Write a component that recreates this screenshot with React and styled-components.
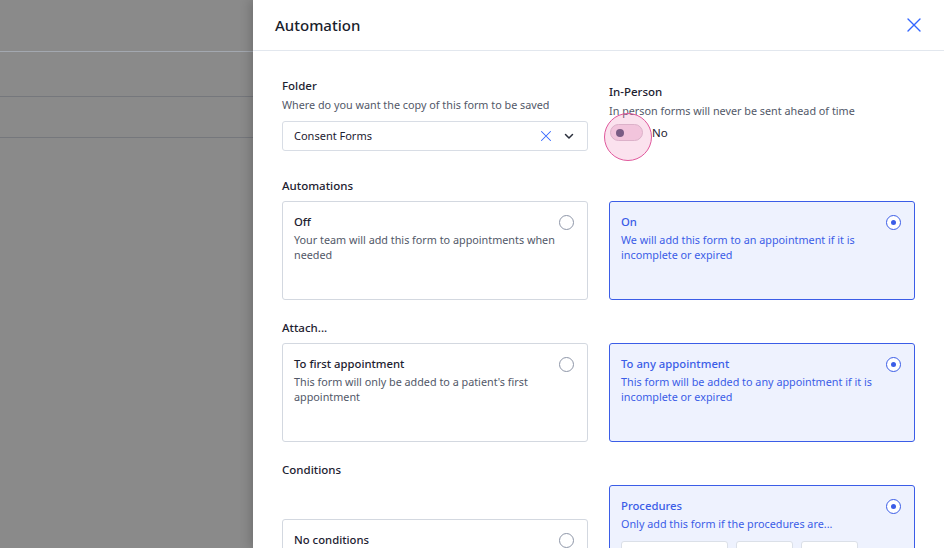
import React from 'react';
import styled, { createGlobalStyle } from 'styled-components';

const GlobalStyle = createGlobalStyle`
  html, body {
    margin: 0;
    padding: 0;
    height: 100%;
    overflow: hidden;
  }
  body {
    font-family: "Noto Sans", "Open Sans", sans-serif;
    color: #1d2130;
  }
  #root {
    height: 100%;
  }
`;

const Screen = styled.div`
  display: flex;
  width: 944px;
  height: 548px;
  overflow: hidden;
`;

const Backdrop = styled.div`
  flex: 0 0 253px;
  background: #8a8a8a;
  display: flex;
  flex-direction: column;
`;

const BackdropRow = styled.div`
  height: ${(p) => p.$h}px;
  flex-shrink: 0;
  border-bottom: 1px solid ${(p) => (p.$light ? '#a3a8b0' : '#75777c')};
`;

const Panel = styled.div`
  flex: 1;
  background: #fff;
  box-shadow: -3px 0 10px rgba(0, 0, 0, 0.18);
  display: flex;
  flex-direction: column;
  position: relative;
`;

const Header = styled.div`
  flex-shrink: 0;
  height: 51px;
  box-sizing: border-box;
  border-bottom: 1px solid #e2e7ee;
  display: flex;
  align-items: center;
  justify-content: space-between;
  padding: 0 22px 1px 22px;
`;

const Title = styled.h1`
  margin: 0;
  font-size: 15px;
  font-weight: 500;
  color: #1a1e2c;
`;

const CloseButton = styled.button`
  border: none;
  background: none;
  padding: 0;
  display: flex;
  color: #3366ff;
  cursor: pointer;
`;

const Body = styled.div`
  flex-shrink: 0;
  padding: 0 29px;
`;

const TwoCols = styled.div`
  display: grid;
  grid-template-columns: 306px 306px;
  column-gap: 21px;
  align-items: ${(p) => p.$align || 'start'};
  margin-top: ${(p) => p.$top || 0}px;
`;

const Field = styled.div`
  display: flex;
  flex-direction: column;
  padding-top: ${(p) => p.$top || 0}px;
`;

const Label = styled.div`
  font-size: 11.5px;
  font-weight: 500;
  color: #1d2130;
  line-height: 16px;
`;

const SectionLabel = styled(Label)`
  margin-top: ${(p) => p.$top}px;
  margin-bottom: 7px;
`;

const Hint = styled.div`
  font-size: 10.8px;
  color: #525868;
  line-height: 16px;
  margin-top: 3px;
`;

const Select = styled.div`
  margin-top: 8px;
  height: 30px;
  box-sizing: border-box;
  border: 1px solid #d8dde5;
  border-radius: 3px;
  display: flex;
  align-items: center;
  padding: 0 12px 1px 11px;
  font-size: 11px;
  color: #1d2130;
`;

const SelectValue = styled.span`
  flex: 1;
`;

const SelectIcons = styled.span`
  display: flex;
  align-items: center;
  gap: 11px;
`;

const ToggleRow = styled.div`
  display: flex;
  align-items: center;
  gap: 9px;
  margin-top: 5px;
  font-size: 11.5px;
  color: #1d2130;
`;

const ToggleTrack = styled.div`
  position: relative;
  width: 33px;
  height: 17px;
  box-sizing: border-box;
  margin-left: 1px;
  border-radius: 9px;
  background: #f4dbe9;
  border: 1px solid #d9c4d2;
`;

const ToggleKnob = styled.span`
  position: absolute;
  left: 5px;
  top: 4px;
  width: 8px;
  height: 8px;
  border-radius: 50%;
  background: #7a5b84;
`;

const FocusRing = styled.span`
  position: absolute;
  left: -7px;
  top: -12px;
  width: 48px;
  height: 48px;
  box-sizing: border-box;
  border-radius: 50%;
  background: rgba(232, 96, 160, 0.18);
  border: 1px solid #e0589c;
  pointer-events: none;
`;

const Card = styled.div`
  position: relative;
  box-sizing: border-box;
  min-height: ${(p) => p.$h || 99}px;
  border-radius: 3px;
  padding: 11px 30px 12px 11px;
  border: 1px solid ${(p) => (p.$selected ? '#3b5de7' : '#d3d8e0')};
  background: ${(p) => (p.$selected ? '#eef2fe' : '#fff')};
  color: ${(p) => (p.$selected ? '#3b5de7' : '#1d2130')};
`;

const CardTitle = styled.div`
  font-size: 11.3px;
  font-weight: 500;
  line-height: 17px;
`;

const CardText = styled.div`
  font-size: 10.8px;
  line-height: 15px;
  margin-top: 2px;
  color: ${(p) => (p.$selected ? '#3b5de7' : '#525868')};
`;

const Radio = styled.span`
  position: absolute;
  right: 13px;
  top: 13px;
  width: 15px;
  height: 15px;
  box-sizing: border-box;
  border-radius: 50%;
  border: ${(p) => (p.$checked ? '1.5px solid #3b5de7' : '1px solid #8e96a8')};
  background: #fff;
  display: flex;
  align-items: center;
  justify-content: center;

  &::after {
    content: '';
    display: ${(p) => (p.$checked ? 'block' : 'none')};
    width: 5px;
    height: 5px;
    border-radius: 50%;
    background: #3b5de7;
  }
`;

const ChipRow = styled.div`
  display: flex;
  gap: 8px;
  margin-top: 10px;
`;

const Chip = styled.div`
  width: ${(p) => p.$w}px;
  height: 28px;
  box-sizing: border-box;
  border: 1px solid #dbe0e8;
  border-radius: 3px;
  background: #fff;
`;

const XIcon = ({ size, color }) => (
  <svg width={size} height={size} viewBox="0 0 16 16" fill="none" stroke={color} strokeWidth="1.4" strokeLinecap="round">
    <path d="M2 2L14 14M14 2L2 14" />
  </svg>
);

const ChevronIcon = () => (
  <svg width="12" height="12" viewBox="0 0 12 12" fill="none" stroke="#2a2f3c" strokeWidth="1.5" strokeLinecap="round" strokeLinejoin="round">
    <path d="M2.5 4.5L6 8L9.5 4.5" />
  </svg>
);

const OptionCard = ({ title, text, selected, h, children }) => (
  <Card $selected={selected} $h={h}>
    <CardTitle>{title}</CardTitle>
    {text && <CardText $selected={selected}>{text}</CardText>}
    {children}
    <Radio $checked={selected} />
  </Card>
);

export default function App() {
  return (
    <Screen>
      <GlobalStyle />
      <Backdrop>
        <BackdropRow $h={51} $light />
        <BackdropRow $h={44} />
        <BackdropRow $h={40} />
      </Backdrop>
      <Panel>
        <Header>
          <Title>Automation</Title>
          <CloseButton aria-label="Close">
            <XIcon size={16} color="#3366ff" />
          </CloseButton>
        </Header>
        <Body>
          <TwoCols $top={27}>
            <Field>
              <Label>Folder</Label>
              <Hint>Where do you want the copy of this form to be saved</Hint>
              <Select>
                <SelectValue>Consent Forms</SelectValue>
                <SelectIcons>
                  <XIcon size={12} color="#3366ff" />
                  <ChevronIcon />
                </SelectIcons>
              </Select>
            </Field>
            <Field $top={6}>
              <Label>In-Person</Label>
              <Hint>In person forms will never be sent ahead of time</Hint>
              <ToggleRow>
                <ToggleTrack>
                  <FocusRing />
                  <ToggleKnob />
                </ToggleTrack>
                No
              </ToggleRow>
            </Field>
          </TwoCols>

          <SectionLabel $top={27}>Automations</SectionLabel>
          <TwoCols>
            <OptionCard title="Off" text="Your team will add this form to appointments when needed" />
            <OptionCard selected title="On" text="We will add this form to an appointment if it is incomplete or expired" />
          </TwoCols>

          <SectionLabel $top={20}>Attach...</SectionLabel>
          <TwoCols>
            <OptionCard title="To first appointment" text="This form will only be added to a patient's first appointment" />
            <OptionCard selected title="To any appointment" text="This form will be added to any appointment if it is incomplete or expired" />
          </TwoCols>

          <SectionLabel $top={20}>Conditions</SectionLabel>
          <TwoCols $align="center">
            <OptionCard title="No conditions" />
            <OptionCard selected h={167} title="Procedures" text="Only add this form if the procedures are...">
              <ChipRow>
                <Chip $w={107} />
                <Chip $w={57} />
                <Chip $w={57} />
              </ChipRow>
            </OptionCard>
          </TwoCols>
        </Body>
      </Panel>
    </Screen>
  );
}
